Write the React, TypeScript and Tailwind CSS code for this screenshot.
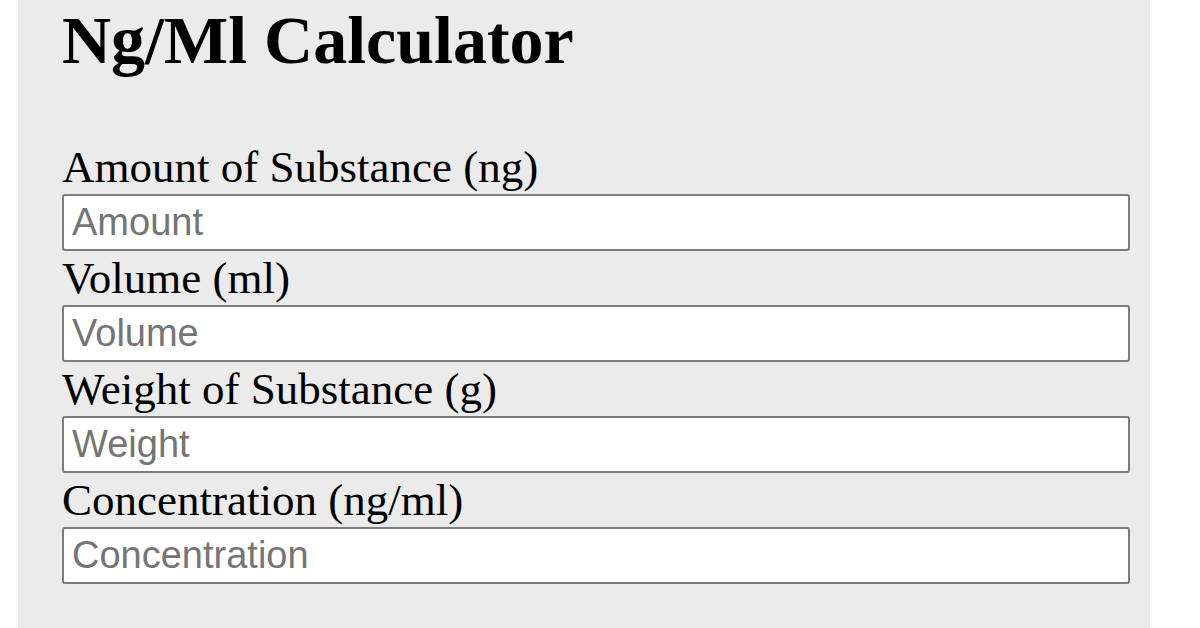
const fields = [
  { label: "Amount of Substance (ng)", placeholder: "Amount" },
  { label: "Volume (ml)", placeholder: "Volume" },
  { label: "Weight of Substance (g)", placeholder: "Weight" },
  { label: "Concentration (ng/ml)", placeholder: "Concentration" },
];

export default function App() {
  return (
    <div className="min-h-screen bg-white pl-[18px] pr-[50px]">
      <div className="bg-[#ebebeb] pl-[44px] pr-[20px] pb-[60px] text-black" style={{ fontFamily: '"Liberation Serif", "Times New Roman", serif' }}>
        <h1 className="m-0 text-[68px] font-bold leading-[80px]">Ng/Ml Calculator</h1>

        <form className="mt-[60px] flex flex-col" onSubmit={(e) => e.preventDefault()}>
          {fields.map((f) => (
            <div key={f.placeholder} className="flex flex-col">
              <label className="block h-[54px] text-[45px] leading-[54px] whitespace-nowrap">{f.label}</label>
              <input
                type="text"
                placeholder={f.placeholder}
                className="h-[57px] w-full rounded-[3px] border-2 border-[#7c7c7c] bg-white px-[8px] text-[38px] text-black outline-none placeholder:text-[#757575]"
                style={{ fontFamily: '"Liberation Sans", Arial, sans-serif' }}
              />
            </div>
          ))}
        </form>
      </div>
    </div>
  );
}
